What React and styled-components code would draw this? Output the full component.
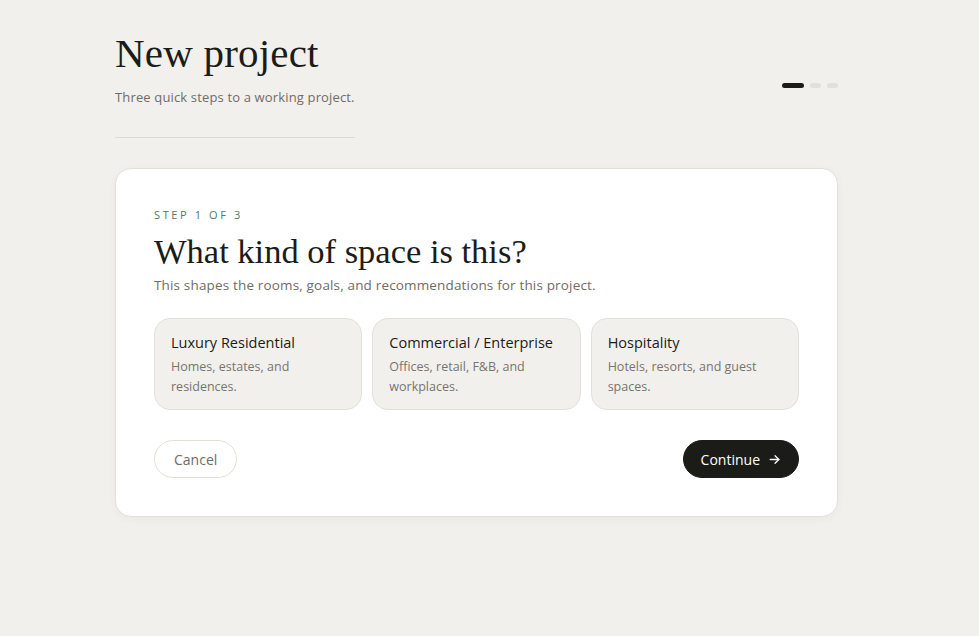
import React from "react";
import styled, { createGlobalStyle } from "styled-components";

const Global = createGlobalStyle`
  html, body { margin: 0; padding: 0; background: #f2f0ec; }
  body { font-family: "Open Sans", "Liberation Sans", sans-serif; color: #1b1c18; }
  * { box-sizing: border-box; }
`;

const Page = styled.div`
  width: 723px;
  margin: 0 0 0 115px;
  padding-top: 30px;
  min-height: 636px;
`;

const Header = styled.header`
  display: flex;
  justify-content: space-between;
  align-items: flex-start;
`;

const TitleBlock = styled.div`
  width: 240px;
  padding-bottom: 31px;
  border-bottom: 1px solid #dedbd5;
`;

const Title = styled.h1`
  margin: 0;
  font-family: "Liberation Serif", "DejaVu Serif", serif;
  font-weight: 400;
  font-size: 41px;
  line-height: 46px;
  letter-spacing: 0.2px;
  color: #1b1c18;
`;

const Subtitle = styled.p`
  margin: 12px 0 0;
  font-size: 13px;
  line-height: 18px;
  letter-spacing: 0.15px;
  color: #6f6c66;
  white-space: nowrap;
`;

const Dots = styled.div`
  display: flex;
  gap: 6px;
  margin-top: 53px;
`;

const Dot = styled.span`
  display: block;
  height: 5px;
  border-radius: 3px;
  width: ${(p) => (p.$active ? "22px" : "11px")};
  background: ${(p) => (p.$active ? "#1b1c18" : "#e3e0da")};
`;

const Card = styled.section`
  margin-top: 30px;
  background: #ffffff;
  border: 1px solid #e3e0da;
  border-radius: 16px;
  padding: 39px 38px 38px;
  box-shadow: 0 2px 8px rgba(40, 35, 25, 0.04);
`;

const Eyebrow = styled.div`
  font-size: 11px;
  line-height: 14px;
  letter-spacing: 2.6px;
  color: #4f7a68;
  text-transform: uppercase;
`;

const Question = styled.h2`
  margin: 9px 0 0;
  font-family: "Liberation Serif", "DejaVu Serif", serif;
  font-weight: 400;
  font-size: 34.5px;
  line-height: 40px;
  color: #1b1c18;
`;

const Lead = styled.p`
  margin: 4px 0 0;
  font-size: 13.5px;
  line-height: 20px;
  letter-spacing: 0.16px;
  color: #6f6c66;
`;

const Options = styled.div`
  display: grid;
  grid-template-columns: repeat(3, 1fr);
  gap: 10px;
  margin-top: 23px;
`;

const Option = styled.button`
  text-align: left;
  font-family: inherit;
  background: #f2f0ec;
  border: 1px solid #e3e0da;
  border-radius: 16px;
  padding: 14px 16px 13px;
  height: 92px;
  cursor: pointer;
  display: flex;
  flex-direction: column;
`;

const OptionTitle = styled.span`
  font-size: 14.5px;
  line-height: 20px;
  color: #1b1c18;
`;

const OptionDesc = styled.span`
  margin-top: 4px;
  font-size: 12.5px;
  line-height: 20px;
  color: #77746e;
`;

const Actions = styled.div`
  display: flex;
  justify-content: space-between;
  align-items: center;
  margin-top: 30px;
`;

const Button = styled.button`
  font-family: inherit;
  font-size: 14px;
  height: 38px;
  border-radius: 19px;
  display: inline-flex;
  align-items: center;
  gap: 8px;
  cursor: pointer;
  padding: 0 ${(p) => (p.$primary ? "17px" : "19px")};
  background: ${(p) => (p.$primary ? "#1b1c18" : "#ffffff")};
  color: ${(p) => (p.$primary ? "#ffffff" : "#6f6c66")};
  border: 1px solid ${(p) => (p.$primary ? "#1b1c18" : "#e3e0da")};
  font-weight: ${(p) => (p.$primary ? 500 : 400)};
`;

const Arrow = () => (
  <svg width="13" height="13" viewBox="0 0 24 24" fill="none" stroke="currentColor" strokeWidth="2.4" strokeLinecap="round" strokeLinejoin="round">
    <path d="M4 12h16" />
    <path d="M13 5l7 7-7 7" />
  </svg>
);

const options = [
  { title: "Luxury Residential", desc: "Homes, estates, and residences." },
  { title: "Commercial / Enterprise", desc: "Offices, retail, F&B, and workplaces." },
  { title: "Hospitality", desc: "Hotels, resorts, and guest spaces." },
];

export default function App() {
  return (
    <>
      <Global />
      <Page>
        <Header>
          <TitleBlock>
            <Title>New project</Title>
            <Subtitle>Three quick steps to a working project.</Subtitle>
          </TitleBlock>
          <Dots>
            <Dot $active />
            <Dot />
            <Dot />
          </Dots>
        </Header>
        <Card>
          <Eyebrow>Step 1 of 3</Eyebrow>
          <Question>What kind of space is this?</Question>
          <Lead>This shapes the rooms, goals, and recommendations for this project.</Lead>
          <Options>
            {options.map((o) => (
              <Option key={o.title}>
                <OptionTitle>{o.title}</OptionTitle>
                <OptionDesc>{o.desc}</OptionDesc>
              </Option>
            ))}
          </Options>
          <Actions>
            <Button>Cancel</Button>
            <Button $primary>
              Continue <Arrow />
            </Button>
          </Actions>
        </Card>
      </Page>
    </>
  );
}
